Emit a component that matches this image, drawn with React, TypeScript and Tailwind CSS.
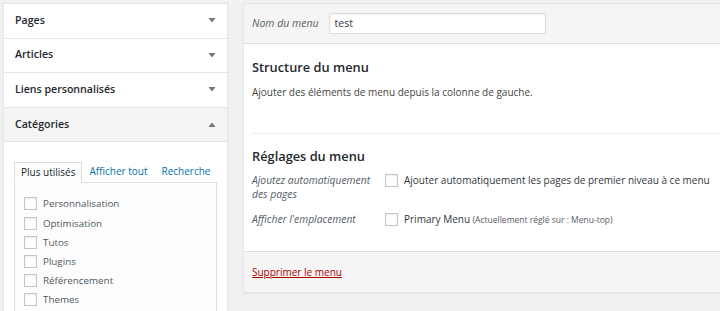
import React from "react";

const Arrow = ({ up }: { up?: boolean }) => (
  <svg width="8" height="5" viewBox="0 0 8 5" className="text-[#72777c]">
    {up ? <path d="M0.5 5 L4 0.5 L7.5 5 Z" fill="currentColor" /> : <path d="M0.5 0 L7.5 0 L4 4.5 Z" fill="currentColor" />}
  </svg>
);

const Box = () => <span className="inline-block w-[13px] h-[13px] border border-[#c5c5c5] bg-white shrink-0 shadow-[inset_0_1px_2px_rgba(0,0,0,0.08)]" />;

const Row = ({ label, up, active }: { label: string; up?: boolean; active?: boolean }) => (
  <div className={`h-[34.6px] flex items-center justify-between pl-[11px] pr-[11px] border-b border-[#e5e5e5] ${active ? "bg-[#f5f5f5]" : "bg-white"}`}>
    <span className="text-[10.6px] font-semibold text-[#23282d]">{label}</span>
    <Arrow up={up} />
  </div>
);

export default function App() {
  const cats = ["Personnalisation", "Optimisation", "Tutos", "Plugins", "Référencement", "Themes"];
  return (
    <div className="h-[311px] w-[720px] overflow-hidden bg-[#f1f1f1] flex items-start pt-[3px] pl-[3px] text-[#23282d]" style={{ fontFamily: '"Open Sans", "Noto Sans", sans-serif' }}>
      <div className="w-[225px] shrink-0 bg-white border border-[#e5e5e5] shadow-[0_1px_1px_rgba(0,0,0,0.04)]">
        <Row label="Pages" />
        <Row label="Articles" />
        <Row label="Liens personnalisés" />
        <Row label="Catégories" up active />
        <div className="pt-[19px] pl-[10px] pr-[10px] pb-[20px]">
          <div className="flex items-end text-[10px] whitespace-nowrap">
            <div className="h-[21px] px-[6px] flex items-center border border-[#dddddd] border-b-[#fdfdfd] bg-[#fdfdfd] -mb-px relative z-10 text-[#23282d]">Plus utilisés</div>
            <div className="h-[21px] px-[7px] flex items-center text-[#0073aa]">Afficher tout</div>
            <div className="h-[21px] px-[7px] flex items-center text-[#0073aa]">Recherche</div>
          </div>
          <div className="border border-[#dddddd] bg-[#fdfdfd] pt-[14px] pl-[9px] pb-[10px] flex flex-col gap-[6.2px]">
            {cats.map((c) => (
              <label key={c} className="flex items-center gap-[6px] text-[9.8px] text-[#50575e] whitespace-nowrap">
                <Box />
                <span className="leading-[13px]">{c}</span>
              </label>
            ))}
          </div>
        </div>
      </div>
      <div className="ml-[15px] flex-1 h-[290px] bg-white border border-[#e5e5e5] border-r-0 shadow-[0_1px_1px_rgba(0,0,0,0.04)] flex flex-col">
        <div className="h-[40px] bg-[#f5f5f5] border-b border-[#dddddd] flex items-center pl-[8px] shrink-0">
          <span className="italic text-[10.5px] text-[#555d66] mr-[10px]">Nom du menu</span>
          <div className="w-[217px] h-[21px] border border-[#dddddd] bg-white flex items-center pl-[5px] text-[10.5px] text-[#32373c] shadow-[inset_0_1px_2px_rgba(0,0,0,0.05)]">test</div>
        </div>
        <div className="flex-1 pl-[8px]">
          <div className="pt-[13px]">
            <h3 className="text-[12.8px] font-semibold leading-[20px]">Structure du menu</h3>
            <p className="text-[10px] text-[#444] mt-[8px] leading-[14px]">Ajouter des éléments de menu depuis la colonne de gauche.</p>
          </div>
          <div className="mt-[34px] border-t border-[#eeeeee]" />
          <div className="pt-[12px]">
            <h3 className="text-[12.8px] font-semibold leading-[20px]">Réglages du menu</h3>
            <div className="flex mt-[7px]">
              <div className="w-[133px] italic text-[10.3px] text-[#555d66] leading-[14px] shrink-0">Ajoutez automatiquement<br />des pages</div>
              <div className="flex items-start gap-[6px] text-[10px] text-[#32373c] whitespace-nowrap">
                <span className="mt-[0.5px] flex"><Box /></span>
                <span className="leading-[14px]">Ajouter automatiquement les pages de premier niveau à ce menu</span>
              </div>
            </div>
            <div className="flex mt-[11px]">
              <div className="w-[133px] italic text-[10.3px] text-[#555d66] leading-[14px] shrink-0">Afficher l'emplacement</div>
              <div className="flex items-start gap-[6px] text-[10px] text-[#32373c] whitespace-nowrap">
                <span className="mt-[0.5px] flex"><Box /></span>
                <span className="leading-[14px]">Primary Menu <span className="text-[8.5px] text-[#555d66]">(Actuellement réglé sur : Menu-top)</span></span>
              </div>
            </div>
          </div>
        </div>
        <div className="h-[41px] shrink-0 bg-[#f5f5f5] border-t border-[#dddddd] flex items-center pl-[8px]">
          <a className="text-[10px] text-[#a00] underline">Supprimer le menu</a>
        </div>
      </div>
    </div>
  );
}
